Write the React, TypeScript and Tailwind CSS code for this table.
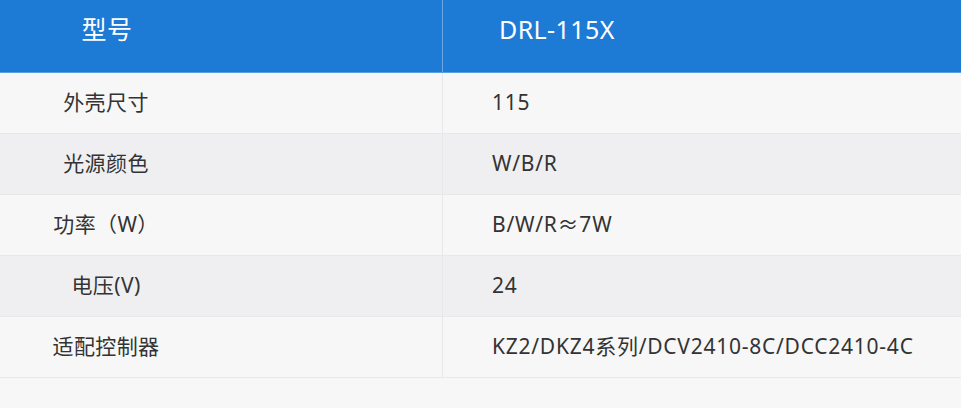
import React from 'react';

const rows = [
  { label: '外壳尺寸', value: '115' },
  { label: '光源颜色', value: 'W/B/R' },
  { label: '功率（W）', value: 'B/W/R≈7W' },
  { label: '电压(V)', value: '24' },
  { label: '适配控制器', value: 'KZ2/DKZ4系列/DCV2410-8C/DCC2410-4C' },
];

const font = { fontFamily: '"Noto Sans", "Noto Sans CJK SC", sans-serif' };

const App = () => {
  return (
    <div className="min-h-screen w-[961px] bg-[#f7f7f7]" style={font}>
      {/* header */}
      <div className="flex h-[73px] bg-[#1d7bd6] border-b border-[#5b9fe3] text-white text-[25px] tracking-[0.4px]">
        <div className="w-[443px] flex items-center pb-[12px] border-r border-[#6aa8e6]">
          <span className="w-[214px] text-center">型号</span>
        </div>
        <div className="flex-1 flex items-center pb-[12px] pl-[56px]">DRL-115X</div>
      </div>

      {rows.map((row, i) => (
        <div
          key={row.label}
          className={`flex h-[61px] border-b border-[#e8e8e8] text-[#333] text-[21px] ${
            i % 2 === 0 ? 'bg-[#f7f7f7]' : 'bg-[#efeff1]'
          }`}
        >
          <div className="w-[443px] flex items-center border-r border-[#e8e8e8]">
            <span className="w-[212px] text-center tracking-[0.4px]">{row.label}</span>
          </div>
          <div className="flex-1 flex items-center pl-[49px] tracking-[0.75px]">{row.value}</div>
        </div>
      ))}
    </div>
  );
};

export default App;
